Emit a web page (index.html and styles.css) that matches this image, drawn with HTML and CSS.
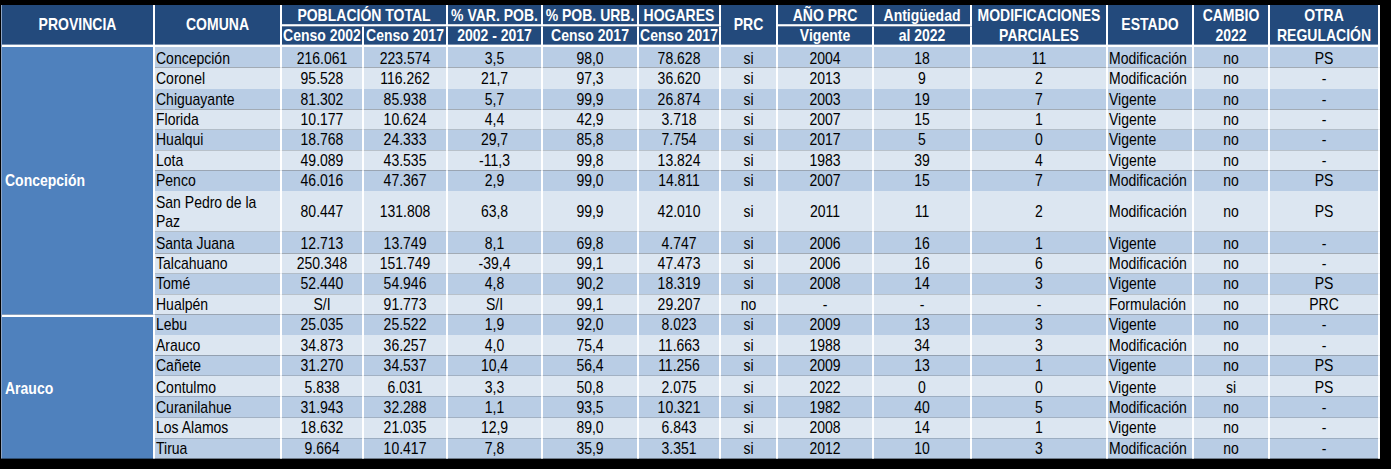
FILE: index.html
```html
<!DOCTYPE html>
<html lang="es">
<head>
<meta charset="utf-8">
<title>PRC Provincias</title>
<link rel="stylesheet" href="styles.css">
</head>
<body>
<table class="tbl">
  <colgroup>
    <col class="c-prov"><col class="c-com"><col class="c-c02"><col class="c-c17"><col class="c-var"><col class="c-urb"><col class="c-hog"><col class="c-prc"><col class="c-ano"><col class="c-ant"><col class="c-mod"><col class="c-est"><col class="c-cam"><col class="c-otr">
  </colgroup>
  <thead>
    <tr class="h1">
      <th rowspan="2">PROVINCIA</th>
      <th rowspan="2">COMUNA</th>
      <th colspan="2">POBLACIÓN TOTAL</th>
      <th>% VAR. POB.</th>
      <th>% POB. URB.</th>
      <th>HOGARES</th>
      <th rowspan="2">PRC</th>
      <th>AÑO PRC</th>
      <th>Antigüedad</th>
      <th rowspan="2" class="two">MODIFICACIONES<br>PARCIALES</th>
      <th rowspan="2">ESTADO</th>
      <th rowspan="2" class="two">CAMBIO<br>2022</th>
      <th rowspan="2" class="two">OTRA<br>REGULACIÓN</th>
    </tr>
    <tr class="h2">
      <th>Censo 2002</th>
      <th>Censo 2017</th>
      <th>2002 - 2017</th>
      <th>Censo 2017</th>
      <th>Censo 2017</th>
      <th>Vigente</th>
      <th>al 2022</th>
    </tr>
  </thead>
  <tbody>
    <tr class="d dark"><td rowspan="12" class="prov">Concepción</td><td class="l">Concepción</td><td>216.061</td><td>223.574</td><td>3,5</td><td>98,0</td><td>78.628</td><td>si</td><td>2004</td><td>18</td><td>11</td><td class="l">Modificación</td><td>no</td><td>PS</td></tr>
    <tr class="d light"><td class="l">Coronel</td><td>95.528</td><td>116.262</td><td>21,7</td><td>97,3</td><td>36.620</td><td>si</td><td>2013</td><td>9</td><td>2</td><td class="l">Modificación</td><td>no</td><td>-</td></tr>
    <tr class="d dark"><td class="l">Chiguayante</td><td>81.302</td><td>85.938</td><td>5,7</td><td>99,9</td><td>26.874</td><td>si</td><td>2003</td><td>19</td><td>7</td><td class="l">Vigente</td><td>no</td><td>-</td></tr>
    <tr class="d light"><td class="l">Florida</td><td>10.177</td><td>10.624</td><td>4,4</td><td>42,9</td><td>3.718</td><td>si</td><td>2007</td><td>15</td><td>1</td><td class="l">Vigente</td><td>no</td><td>-</td></tr>
    <tr class="d dark"><td class="l">Hualqui</td><td>18.768</td><td>24.333</td><td>29,7</td><td>85,8</td><td>7.754</td><td>si</td><td>2017</td><td>5</td><td>0</td><td class="l">Vigente</td><td>no</td><td>-</td></tr>
    <tr class="d light"><td class="l">Lota</td><td>49.089</td><td>43.535</td><td>-11,3</td><td>99,8</td><td>13.824</td><td>si</td><td>1983</td><td>39</td><td>4</td><td class="l">Vigente</td><td>no</td><td>-</td></tr>
    <tr class="d dark"><td class="l">Penco</td><td>46.016</td><td>47.367</td><td>2,9</td><td>99,0</td><td>14.811</td><td>si</td><td>2007</td><td>15</td><td>7</td><td class="l">Modificación</td><td>no</td><td>PS</td></tr>
    <tr class="d light tall"><td class="l">San Pedro de la<br>Paz</td><td>80.447</td><td>131.808</td><td>63,8</td><td>99,9</td><td>42.010</td><td>si</td><td>2011</td><td>11</td><td>2</td><td class="l">Modificación</td><td>no</td><td>PS</td></tr>
    <tr class="d dark"><td class="l">Santa Juana</td><td>12.713</td><td>13.749</td><td>8,1</td><td>69,8</td><td>4.747</td><td>si</td><td>2006</td><td>16</td><td>1</td><td class="l">Vigente</td><td>no</td><td>-</td></tr>
    <tr class="d light"><td class="l">Talcahuano</td><td>250.348</td><td>151.749</td><td>-39,4</td><td>99,1</td><td>47.473</td><td>si</td><td>2006</td><td>16</td><td>6</td><td class="l">Modificación</td><td>no</td><td>-</td></tr>
    <tr class="d dark"><td class="l">Tomé</td><td>52.440</td><td>54.946</td><td>4,8</td><td>90,2</td><td>18.319</td><td>si</td><td>2008</td><td>14</td><td>3</td><td class="l">Vigente</td><td>no</td><td>PS</td></tr>
    <tr class="d light"><td class="l">Hualpén</td><td>S/I</td><td>91.773</td><td>S/I</td><td>99,1</td><td>29.207</td><td>no</td><td>-</td><td>-</td><td>-</td><td class="l">Formulación</td><td>no</td><td>PRC</td></tr>
    <tr class="d dark"><td rowspan="7" class="prov sep">Arauco</td><td class="l">Lebu</td><td>25.035</td><td>25.522</td><td>1,9</td><td>92,0</td><td>8.023</td><td>si</td><td>2009</td><td>13</td><td>3</td><td class="l">Vigente</td><td>no</td><td>-</td></tr>
    <tr class="d light"><td class="l">Arauco</td><td>34.873</td><td>36.257</td><td>4,0</td><td>75,4</td><td>11.663</td><td>si</td><td>1988</td><td>34</td><td>3</td><td class="l">Modificación</td><td>no</td><td>-</td></tr>
    <tr class="d dark"><td class="l">Cañete</td><td>31.270</td><td>34.537</td><td>10,4</td><td>56,4</td><td>11.256</td><td>si</td><td>2009</td><td>13</td><td>1</td><td class="l">Vigente</td><td>no</td><td>PS</td></tr>
    <tr class="d light"><td class="l">Contulmo</td><td>5.838</td><td>6.031</td><td>3,3</td><td>50,8</td><td>2.075</td><td>si</td><td>2022</td><td>0</td><td>0</td><td class="l">Vigente</td><td>si</td><td>PS</td></tr>
    <tr class="d dark"><td class="l">Curanilahue</td><td>31.943</td><td>32.288</td><td>1,1</td><td>93,5</td><td>10.321</td><td>si</td><td>1982</td><td>40</td><td>5</td><td class="l">Modificación</td><td>no</td><td>-</td></tr>
    <tr class="d light"><td class="l">Los Alamos</td><td>18.632</td><td>21.035</td><td>12,9</td><td>89,0</td><td>6.843</td><td>si</td><td>2008</td><td>14</td><td>1</td><td class="l">Vigente</td><td>no</td><td>-</td></tr>
    <tr class="d dark"><td class="l">Tirua</td><td>9.664</td><td>10.417</td><td>7,8</td><td>35,9</td><td>3.351</td><td>si</td><td>2012</td><td>10</td><td>3</td><td class="l">Modificación</td><td>no</td><td>-</td></tr>
  </tbody>
</table>
</body>
</html>
```

FILE: styles.css
```css
html, body {
  margin: 0;
  padding: 0;
  background: #000;
}
body {
  padding: 5px 0 0 1px;
  height: 469px;
  box-sizing: border-box;
  overflow: hidden;
  font-family: "Liberation Sans", Arial, sans-serif;
}
/* the source image is slightly stretched vertically */
.tbl {
  table-layout: fixed;
  width: 1379px;
  border-collapse: separate;
  border-spacing: 0;
  font-size: 14px;
  border-left: 1px solid #8da4c4;
  transform: scaleY(1.2);
  transform-origin: 0 0;
}
.c-prov { width: 153px; }
.c-com { width: 127px; }
.c-c02 { width: 82px; }
.c-c17 { width: 84px; }
.c-var { width: 95px; }
.c-urb { width: 96px; }
.c-hog { width: 82px; }
.c-prc { width: 57px; }
.c-ano { width: 96px; }
.c-ant { width: 98px; }
.c-mod { width: 136px; }
.c-est { width: 86px; }
.c-cam { width: 76px; }
.c-otr { width: 110px; }

th {
  background: #234a7c;
  color: #fff;
  font-weight: bold;
  padding: 0;
  text-align: center;
  vertical-align: middle;
  border-right: 2px solid #fff;
  border-bottom: 2px solid #fff;
  box-sizing: border-box;
  line-height: 15px;
  white-space: nowrap;
}
.h1 th { height: 18.33px; }
.h2 th { height: 16.67px; }
th.two { line-height: 16.67px; }

td {
  padding: 0 2px;
  text-align: center;
  vertical-align: middle;
  color: #000;
  border-right: 2px solid #fff;
  box-sizing: border-box;
  line-height: 16.67px;
  white-space: nowrap;
}
.d td { height: 17.125px; }
.d.tall td { height: 34.25px; }
.dark td { background: #b9cde5; }
.light td { background: #dce6f1; }
td.l { text-align: left; padding-left: 1px; }
td.prov {
  background: #4f81bd;
  color: #fff;
  font-weight: bold;
  text-align: left;
  padding-left: 3px;
}
td.prov.sep { border-top: 2px solid #fff; }
```
